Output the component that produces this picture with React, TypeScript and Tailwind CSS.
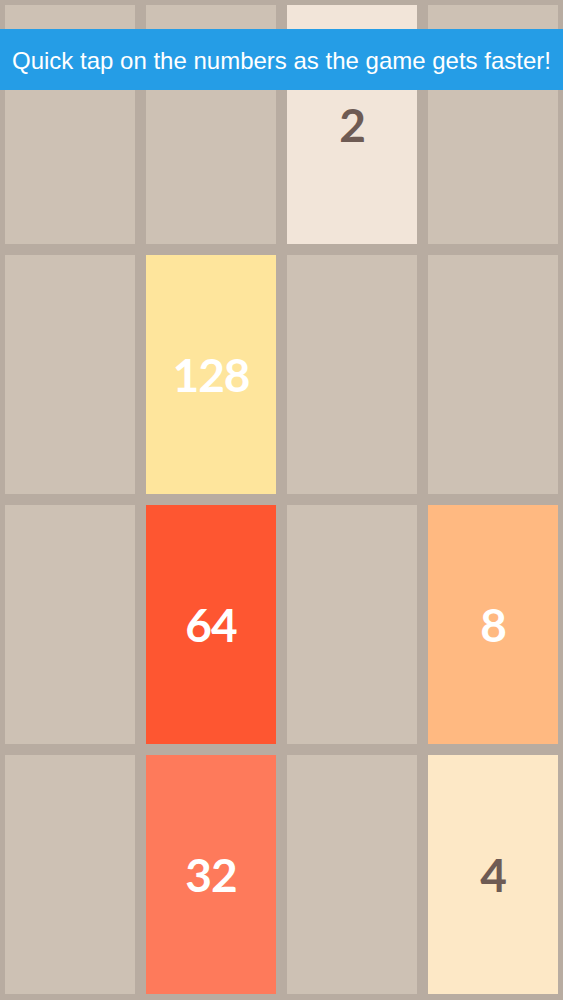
import React from "react";

type Tile = { v?: number; bg: string; fg?: string };

const E = "bg-[#cdc1b4]";

const tiles: Tile[] = [
  { bg: E }, { bg: E }, { v: 2, bg: "bg-[#f2e5d9]", fg: "text-[#6e5b54]" }, { bg: E },
  { bg: E }, { v: 128, bg: "bg-[#fee59c]", fg: "text-white" }, { bg: E }, { bg: E },
  { bg: E }, { v: 64, bg: "bg-[#fe5631]", fg: "text-white" }, { bg: E }, { v: 8, bg: "bg-[#ffb981]", fg: "text-white" },
  { bg: E }, { v: 32, bg: "bg-[#fe7a5b]", fg: "text-white" }, { bg: E }, { v: 4, bg: "bg-[#fde8c6]", fg: "text-[#6e5b54]" },
];

export default function App() {
  return (
    <div className="relative w-[563px] h-[1000px] bg-[#b8aca1] overflow-hidden">
      <div className="grid grid-cols-4 grid-rows-4 gap-[11px] pt-[5px] pb-[6px] px-[5px] h-full">
        {tiles.map((t, i) => (
          <div key={i} className={`${t.bg} flex items-center justify-center`}>
            {t.v !== undefined && (
              <span
                className={`${t.fg} text-[46px] font-bold leading-none tracking-[-1px]`}
                style={{ fontFamily: "Lato, 'Noto Sans', sans-serif" }}
              >
                {t.v}
              </span>
            )}
          </div>
        ))}
      </div>
      <div className="absolute left-0 right-0 top-[29px] h-[61px] bg-[#259de6] flex items-center justify-center">
        <span
          className="text-white text-[24px] leading-none pt-[2px] whitespace-nowrap"
          style={{ fontFamily: "'Liberation Sans', Arial, sans-serif" }}
        >
          Quick tap on the numbers as the game gets faster!
        </span>
      </div>
    </div>
  );
}
